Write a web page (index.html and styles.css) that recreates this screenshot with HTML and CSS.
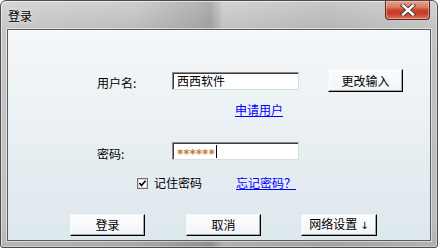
FILE: index.html
```html
<!DOCTYPE html>
<html>
<head>
<meta charset="utf-8">
<link rel="stylesheet" href="styles.css">
</head>
<body>
<div class="window">
  <div class="titlebar">
    <span class="title">登录</span>
    <div class="close">
      <svg width="16" height="12" viewBox="0 0 16 12">
        <path d="M3 1.5 L13 10.5 M13 1.5 L3 10.5" stroke="#3a3a3a" stroke-width="4.2" stroke-linecap="square"/>
        <path d="M3 1.5 L13 10.5 M13 1.5 L3 10.5" stroke="#ffffff" stroke-width="2.4" stroke-linecap="square"/>
      </svg>
    </div>
  </div>
  <div class="client">
    <div class="row row-user">
      <span class="lbl">用户名:</span>
      <div class="input">西西软件</div>
      <button class="btn btn-change">更改输入</button>
    </div>
    <div class="row row-link">
      <a class="link">申请用户</a>
    </div>
    <div class="row row-pass">
      <span class="lbl">密码:</span>
      <div class="input pw"><span class="stars">******</span><span class="caret"></span></div>
    </div>
    <div class="row row-opts">
      <span class="check">
        <svg width="11" height="11" viewBox="0 0 11 11">
          <rect x="0.5" y="0.5" width="10" height="10" fill="#fff" stroke="#707070"/>
          <rect x="1.5" y="1.5" width="8" height="8" fill="none" stroke="#d8d8d8"/>
          <path d="M2.5 5 L4.5 7.5 L8.5 2.8" fill="none" stroke="#000" stroke-width="1.7"/>
        </svg>
      </span>
      <span class="remember">记住密码</span>
      <a class="link forgot">忘记密码？</a>
    </div>
    <div class="row row-btns">
      <button class="btn">登录</button>
      <button class="btn">取消</button>
      <button class="btn btn-net">网络设置<span class="arrow">↓</span></button>
    </div>
  </div>
</div>
</body>
</html>
```

FILE: styles.css
```css
html, body {
  margin: 0;
  padding: 0;
  background: #ffffff;
}
body {
  font-family: "Noto Sans CJK SC", "Noto Sans", sans-serif;
  font-size: 12px;
  color: #000;
}
.window {
  width: 438px;
  height: 248px;
  box-sizing: border-box;
  border: 1px solid #4c4c4c;
  border-radius: 6px 6px 3px 3px;
  padding: 0 6px 6px 6px;
  display: flex;
  flex-direction: column;
  background:
    linear-gradient(90deg, rgba(255,255,255,0.15) 0%, rgba(255,255,255,0) 30%, rgba(0,0,0,0.12) 45%, rgba(0,0,0,0.16) 48%, rgba(255,255,255,0.08) 51%, rgba(0,0,0,0.04) 75%, rgba(255,255,255,0.1) 100%),
    linear-gradient(#cfcfcf, #bcbcbc 12%, #b4b4b4 90%, #a8a8a8);
  box-shadow: inset 1px 1px 0 rgba(255,255,255,0.55), inset -1px -1px 0 rgba(255,255,255,0.35);
}
.titlebar {
  height: 28px;
  flex: none;
  display: flex;
  justify-content: space-between;
  align-items: flex-start;
}
.title {
  padding: 8px 0 0 1px;
  line-height: 14px;
  color: #000;
  text-shadow: 0 0 4px rgba(255,255,255,0.9);
}
.close {
  width: 45px;
  height: 19px;
  margin-right: 1px;
  box-sizing: border-box;
  border: 1px solid #5a2a22;
  border-top: none;
  border-radius: 0 0 4px 4px;
  background: linear-gradient(#e9a08f 0%, #dd7a65 35%, #c8412b 50%, #c63c26 70%, #df7560 100%);
  box-shadow: inset 0 0 0 1px rgba(255,210,200,0.45);
  display: flex;
  justify-content: center;
  align-items: center;
}
.client {
  flex: 1;
  border: 1px solid #5c5c5c;
  box-shadow: 0 0 0 1px rgba(255,255,255,0.5);
  background: linear-gradient(#f5f8fa, #e9eff3 50%, #dde8ed);
  display: flex;
  flex-direction: column;
}
.row {
  display: flex;
  align-items: center;
}
.row-user {
  margin-top: 39px;
  height: 23px;
  padding-left: 89px;
}
.lbl {
  width: 75px;
  line-height: 14px;
  padding-top: 4px;
}
.input {
  width: 127px;
  height: 18px;
  box-sizing: border-box;
  background: #fff;
  border: 1px solid;
  border-color: #8a8a8a #dcdcdc #dcdcdc #8a8a8a;
  box-shadow: inset 1px 1px 0 #3c3c3c;
  padding: 1px 0 0 4px;
  line-height: 14px;
  display: flex;
  align-items: center;
}
.btn {
  font-family: "Noto Sans CJK SC", "Noto Sans", sans-serif;
  font-size: 12px;
  color: #000;
  width: 75px;
  height: 22px;
  padding: 0;
  box-sizing: border-box;
  border: 1px solid;
  border-color: #f4f4f4 #000 #000 #f4f4f4;
  box-shadow: inset -1px -1px 0 #a6a6a6, inset 1px 1px 0 #ffffff;
  background: linear-gradient(#fbfcfd, #f2f5f7);
  line-height: 14px;
}
.btn-change {
  margin-left: 29px;
  height: 23px;
}
.row-link {
  margin-top: 11px;
  height: 14px;
  padding-left: 227px;
}
.link {
  color: #0000ff;
  text-decoration: underline;
  line-height: 14px;
}
.row-pass {
  margin-top: 25px;
  height: 18px;
  padding-left: 89px;
}
.row-pass .lbl {
  padding-top: 5px;
}
.stars {
  color: #c0782e;
  font-family: "DejaVu Sans", sans-serif;
  font-size: 12px;
  font-weight: bold;
  letter-spacing: 0;
  line-height: 12px;
  padding-top: 4px;
}
.caret {
  width: 1px;
  height: 13px;
  background: #000;
  margin-left: 1px;
}
.row-opts {
  margin-top: 16px;
  height: 14px;
  padding-left: 129px;
}
.check {
  width: 11px;
  height: 11px;
  display: flex;
}
.remember {
  margin-left: 6px;
  line-height: 14px;
}
.forgot {
  margin-left: 34px;
}
.row-btns {
  margin-top: 24px;
  height: 22px;
  padding-left: 62px;
  gap: 41px;
}
.row-btns .btn-net {
  width: 76px;
  margin-left: -1px;
}
.arrow {
  font-family: "DejaVu Sans", sans-serif;
  font-size: 10px;
  margin-left: 3px;
}
```
